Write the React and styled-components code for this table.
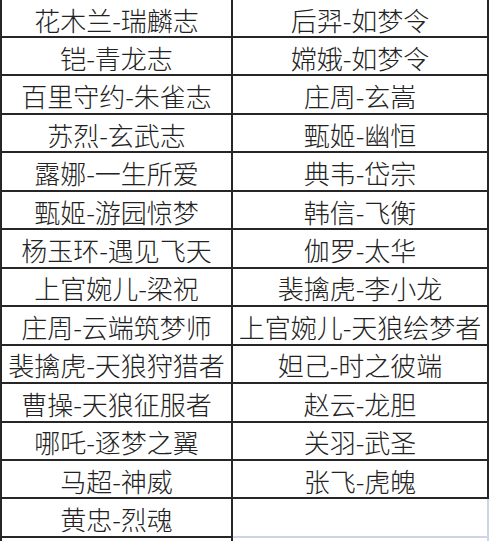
import styled, { createGlobalStyle } from "styled-components";

const skins = [
  ["花木兰-瑞麟志", "后羿-如梦令"],
  ["铠-青龙志", "嫦娥-如梦令"],
  ["百里守约-朱雀志", "庄周-玄嵩"],
  ["苏烈-玄武志", "甄姬-幽恒"],
  ["露娜-一生所爱", "典韦-岱宗"],
  ["甄姬-游园惊梦", "韩信-飞衡"],
  ["杨玉环-遇见飞天", "伽罗-太华"],
  ["上官婉儿-梁祝", "裴擒虎-李小龙"],
  ["庄周-云端筑梦师", "上官婉儿-天狼绘梦者"],
  ["裴擒虎-天狼狩猎者", "妲己-时之彼端"],
  ["曹操-天狼征服者", "赵云-龙胆"],
  ["哪吒-逐梦之翼", "关羽-武圣"],
  ["马超-神威", "张飞-虎魄"],
  ["黄忠-烈魂", ""],
];

const GlobalStyle = createGlobalStyle`
  html, body {
    margin: 0;
    padding: 0;
    background: #ffffff;
  }
`;

function App() {
  const last = skins.length - 1;
  return (
    <>
      <GlobalStyle />
      <Sheet>
        {skins.map(([left, right], i) => (
          <Row key={left}>
            <Cell>{left}</Cell>
            <Cell $faint={i === last}>{right}</Cell>
          </Row>
        ))}
        <Row>
          <Cell $open />
          <Cell $open $faint />
        </Row>
      </Sheet>
    </>
  );
}

const Sheet = styled.div`
  width: 489px;
  height: 541px;
  overflow: hidden;
  display: grid;
  grid-template-columns: 231px 256px;
  grid-template-rows: 38px repeat(13, 38.46px) 20px;
  border-left: 2px solid #262626;
  font-family: "Noto Sans CJK SC", "Noto Sans", sans-serif;
  font-size: 26px;
  font-weight: 300;
  color: #222222;
`;

const Row = styled.div`
  display: contents;
`;

const Cell = styled.div`
  display: flex;
  align-items: center;
  justify-content: center;
  padding-top: 2px;
  box-sizing: border-box;
  white-space: nowrap;
  border-right: 2px solid ${(p) => (p.$faint ? "#cdd5e6" : "#262626")};
  border-bottom: ${(p) =>
    p.$open ? "none" : `2px solid ${p.$faint ? "#cdd5e6" : "#262626"}`};
`;

export default App;
